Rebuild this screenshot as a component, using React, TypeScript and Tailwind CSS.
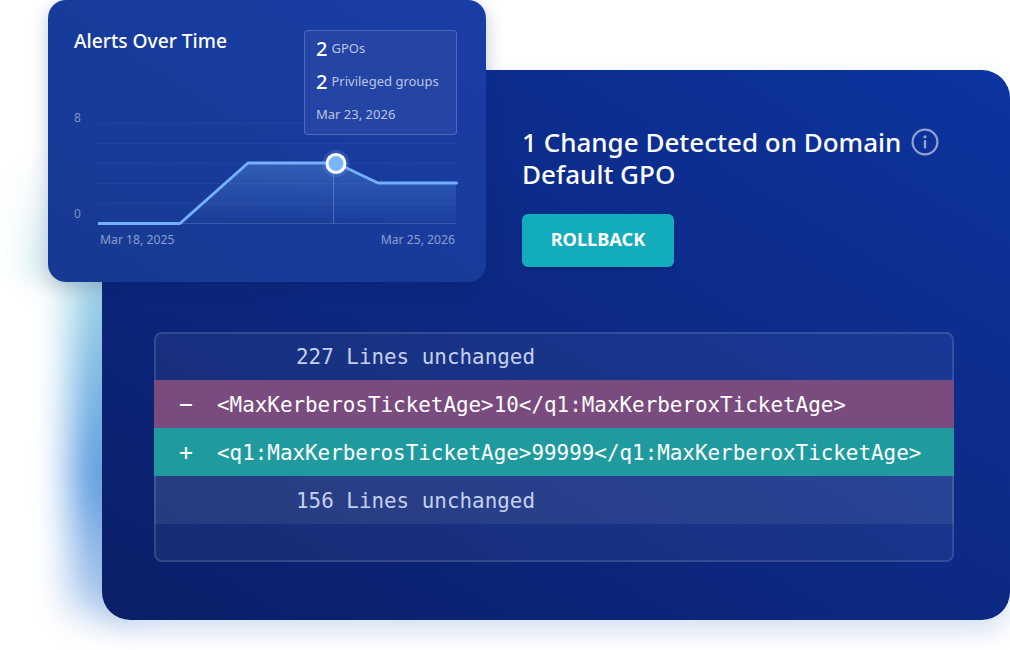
const sans = "font-['Noto_Sans',sans-serif]";
const mono = "font-['DejaVu_Sans_Mono',monospace]";

function DiffRow({ sign, text, className }: { sign?: string; text: string; className: string }) {
    return (
        <div className={`flex h-12 items-center pt-1 text-[20.9px] text-white ${className}`}>
            <span className="w-[63px] pb-1 pl-[1px] text-center text-[23px] leading-none">{sign}</span>
            <span className="whitespace-pre">{text}</span>
        </div>
    );
}

function InfoIcon() {
    return (
        <svg width="28" height="28" viewBox="0 0 28 28" fill="none" className="text-white/55">
            <circle cx="14" cy="14" r="12.4" stroke="currentColor" strokeWidth="2.2" />
            <circle cx="14" cy="8.8" r="1.6" fill="currentColor" />
            <rect x="12.8" y="12" width="2.4" height="8.6" rx="1" fill="currentColor" />
        </svg>
    );
}

function Chart() {
    const grid = [13, 33, 53, 73, 93];
    return (
        <svg width="362" height="122" viewBox="0 0 362 122" fill="none">
            <defs>
                <linearGradient id="area" x1="0" y1="0" x2="0" y2="1">
                    <stop offset="0" stopColor="#7ab5ff" stopOpacity="0.28" />
                    <stop offset="1" stopColor="#7ab5ff" stopOpacity="0.02" />
                </linearGradient>
            </defs>
            {grid.map((y) => (
                <line key={y} x1="0" x2="358" y1={y + 0.5} y2={y + 0.5} stroke="#ffffff" strokeOpacity="0.16" strokeDasharray="1 3" />
            ))}
            <path d="M82 113.5 L150 53 H238 L280 73 H358 V113.5 Z" fill="url(#area)" />
            <line x1="0" x2="358" y1="113.5" y2="113.5" stroke="#ffffff" strokeOpacity="0.15" />
            <line x1="235.5" x2="235.5" y1="60" y2="113" stroke="#ffffff" strokeOpacity="0.22" />
            <path d="M0 113.5 H82 L150 53 H238 L280 73 H358.5" stroke="#74b0fb" strokeWidth="3" strokeLinecap="round" strokeLinejoin="round" />
            <circle cx="238" cy="53.5" r="13.5" fill="#74b0fb" fillOpacity="0.2" />
            <circle cx="238" cy="53.5" r="9" fill="#7ab5ff" stroke="#ffffff" strokeWidth="3" />
        </svg>
    );
}

export default function App() {
    return (
        <div className={`relative h-[650px] w-[1010px] overflow-hidden bg-white ${sans}`}>
            {/* glow behind the cards */}
            <div className="absolute left-[70px] top-[270px] h-[345px] w-[56px] bg-gradient-to-b from-[#a5dbe6] via-[#5a9ae0] via-60% to-[#bcd2ee] blur-[18px]" />
            <div className="absolute left-[26px] top-[150px] h-[130px] w-[30px] bg-gradient-to-b from-white to-[#cbe9ef] blur-[14px]" />

            <div className="relative ml-[102px] mt-[70px] flex h-[550px] w-[908px] flex-col rounded-[28px] bg-gradient-to-tr from-[#0b1f68] to-[#0c34a0] pl-[52px] pr-[56px] pt-[56px] shadow-[0_12px_24px_rgba(60,120,200,0.22)]">
                <div className="pl-[368px]">
                    <div className="flex items-center gap-[10px] text-[26px] font-medium leading-8 text-white">
                        <span>1 Change Detected on Domain</span>
                        <InfoIcon />
                    </div>
                    <div className="text-[26px] font-medium leading-8 text-white">Default GPO</div>
                    <button className="mt-6 block h-[53px] w-[152px] rounded-md bg-[#12acbc] pb-[2px] text-[18.2px] font-bold text-white shadow-md">
                        ROLLBACK
                    </button>
                </div>

                <div className={`mt-[65px] h-[230px] overflow-hidden rounded-lg bg-white/5 ring-2 ring-inset ring-white/[0.12] ${mono}`}>
                    <div className="flex h-12 items-center whitespace-pre pl-[142px] pt-1 text-[20.9px] text-[#c6d0ee]">227 Lines unchanged</div>
                    <DiffRow sign="−" text="<MaxKerberosTicketAge>10</q1:MaxKerberoxTicketAge>" className="bg-[#7a4b7e]" />
                    <DiffRow sign="+" text="<q1:MaxKerberosTicketAge>99999</q1:MaxKerberoxTicketAge>" className="bg-[#1f9ba0]" />
                    <div className="flex h-12 items-center whitespace-pre bg-white/[0.07] pl-[142px] pt-1 text-[20.9px] text-[#c6d0ee]">156 Lines unchanged</div>
                </div>
            </div>

            <div className="absolute left-[48px] top-0 h-[282px] w-[438px] rounded-[18px] bg-gradient-to-tr from-[#163a92] to-[#193da6] pl-[26px] pt-7 shadow-[0_6px_18px_rgba(10,30,90,0.25)]">
                <div className="text-[19.2px] font-medium leading-[26px] text-white">Alerts Over Time</div>

                <div className="mt-[56px] flex">
                    <div className="flex h-[112px] w-6 flex-col justify-between text-xs leading-4 text-white/45">
                        <span>8</span>
                        <span>0</span>
                    </div>
                    <Chart />
                </div>
                <div className="flex w-[381px] justify-between pl-[26px] text-[12.2px] leading-4 text-white/50">
                    <span>Mar 18, 2025</span>
                    <span>Mar 25, 2026</span>
                </div>

                {/* tooltip over the chart */}
                <div className="absolute left-[256px] top-[30px] h-[105px] w-[153px] rounded border border-white/20 bg-[#2444a6] px-[11px] pt-[1px] text-[13px] text-white/70">
                    <div className="flex h-[33px] items-center gap-1">
                        <span className="text-[20px] font-medium leading-none text-white">2</span>
                        <span>GPOs</span>
                    </div>
                    <div className="flex h-[33px] items-center gap-1">
                        <span className="text-[20px] font-medium leading-none text-white">2</span>
                        <span>Privileged groups</span>
                    </div>
                    <div className="flex h-[33px] items-center">Mar 23, 2026</div>
                </div>
            </div>
        </div>
    );
}
